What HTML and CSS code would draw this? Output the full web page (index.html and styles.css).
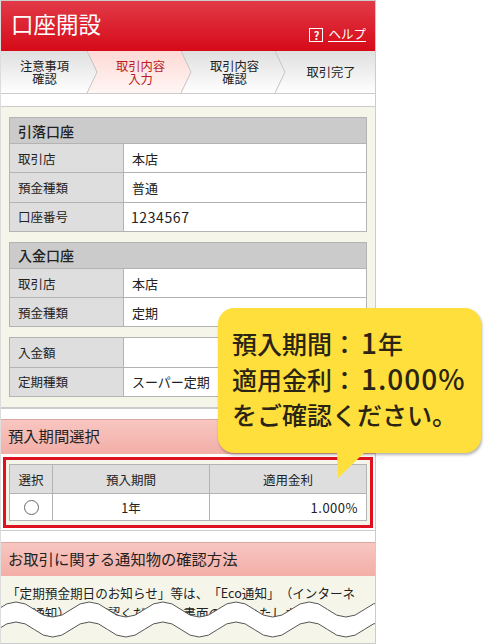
FILE: index.html
```html
<!DOCTYPE html>
<html lang="ja">
<head>
    <meta charset="UTF-8">
    <title>口座開設</title>
    <link rel="stylesheet" href="styles.css">
</head>
<body>
    <div class="page">
        <div class="phone">
            <header class="app-header">
                <h1>口座開設</h1>
                <a class="help"><span class="help-icon">?</span><span class="help-label">ヘルプ</span></a>
            </header>

            <nav class="steps">
                <svg class="steps-art" width="375" height="42" viewBox="0 0 375 42">
                    <defs>
                        <linearGradient id="active-bg" x1="0" y1="0" x2="0" y2="1">
                            <stop offset="0" stop-color="#fdd9d5"/>
                            <stop offset="1" stop-color="#fff6f4"/>
                        </linearGradient>
                    </defs>
                    <path d="M86 0 L96 21 L86 42 L180 42 L190 21 L180 0 Z" fill="url(#active-bg)"/>
                    <path d="M86 0 L96 21 L86 42 M180 0 L190 21 L180 42 M274 0 L284 21 L274 42" fill="none" stroke="#c4c4c4" stroke-width="1"/>
                </svg>
                <div class="step step-first">注意事項<br>確認</div>
                <div class="step step-active">取引内容<br>入力</div>
                <div class="step">取引内容<br>確認</div>
                <div class="step step-last">取引完了</div>
            </nav>

            <div class="gap gap-top"></div>

            <section class="panel">
                <table class="info">
                    <colgroup><col class="col-label"><col></colgroup>
                    <tr><th colspan="2" class="info-title">引落口座</th></tr>
                    <tr><th>取引店</th><td>本店</td></tr>
                    <tr><th>預金種類</th><td>普通</td></tr>
                    <tr><th>口座番号</th><td class="account-no">1234567</td></tr>
                </table>
                <table class="info">
                    <colgroup><col class="col-label"><col></colgroup>
                    <tr><th colspan="2" class="info-title">入金口座</th></tr>
                    <tr><th>取引店</th><td>本店</td></tr>
                    <tr><th>預金種類</th><td>定期</td></tr>
                </table>
                <table class="info">
                    <colgroup><col class="col-label"><col></colgroup>
                    <tr><th>入金額</th><td></td></tr>
                    <tr><th>定期種類</th><td>スーパー定期</td></tr>
                </table>
            </section>

            <div class="gap gap-mid"></div>

            <h2 class="section-head">預入期間選択</h2>
            <div class="select-box">
                <table class="period">
                    <tr><th class="col-radio">選択</th><th class="col-term">預入期間</th><th>適用金利</th></tr>
                    <tr>
                        <td class="col-radio"><span class="radio"></span></td>
                        <td class="col-term">1年</td>
                        <td class="rate">1.000%</td>
                    </tr>
                </table>
            </div>

            <div class="gap gap-low"></div>

            <h2 class="section-head section-head-low">お取引に関する通知物の確認方法</h2>
            <div class="notice">
                <p>「定期預金期日のお知らせ」等は、「Eco通知」（インターネ<br>ット通知）でご確認ください。書面の送付いたしません。</p>
            </div>

            <svg class="wave" width="374" height="50" viewBox="0 0 374 50">
                <path fill="#fff" d="M-3.3 14.5 Q15 -0.5 33.3 14.5 T70 14.5 T106.6 14.5 T143.3 14.5 T180 14.5 T216.6 14.5 T253.3 14.5 T290 14.5 T326.6 14.5 T363.3 14.5 T400 14.5 L400 34.5 Q381.6 19.5 363.3 34.5 T326.6 34.5 T290 34.5 T253.3 34.5 T216.6 34.5 T180 34.5 T143.3 34.5 T106.6 34.5 T70 34.5 T33.3 34.5 T-3.3 34.5 Z"/>
                <path class="wave-line" d="M-3.3 14.5 Q15 -0.5 33.3 14.5 T70 14.5 T106.6 14.5 T143.3 14.5 T180 14.5 T216.6 14.5 T253.3 14.5 T290 14.5 T326.6 14.5 T363.3 14.5 T400 14.5"/>
                <path class="wave-line" d="M-3.3 34.5 Q15 19.5 33.3 34.5 T70 34.5 T106.6 34.5 T143.3 34.5 T180 34.5 T216.6 34.5 T253.3 34.5 T290 34.5 T326.6 34.5 T363.3 34.5 T400 34.5"/>
            </svg>
        </div>

        <div class="callout">
            <p>預入期間：<span class="callout-num">1</span>年<br>適用金利：<span class="callout-num">1.000%</span><br>をご確認ください。</p>
            <svg class="callout-tail" width="28" height="26" viewBox="0 0 28 26"><path d="M0 0 L28 0 L1 26 Z" fill="#fedf3c"/></svg>
        </div>
    </div>
</body>
</html>
```
FILE: styles.css
```css
* {
    box-sizing: border-box;
}

html, body {
    margin: 0;
    height: 644px;
    overflow: hidden;
    background-color: #fff;
}

body {
    font-family: "Noto Sans CJK JP", "Liberation Sans", sans-serif;
    color: #222;
    text-spacing-trim: space-all;
}

.page {
    position: relative;
    width: 485px;
    height: 644px;
}

.phone {
    position: relative;
    width: 376px;
    height: 644px;
    overflow: hidden;
    padding-top: 1px;
    border: 1px solid #ccc;
    border-left-color: #ddd;
}

.app-header {
    display: flex;
    justify-content: space-between;
    align-items: flex-start;
    height: 50px;
    margin-top: -1px;
    padding: 0 9px 0 10px;
    background: linear-gradient(#e23a48, #d60a18);
    color: #fff;
}

.app-header h1 {
    margin: 6px 0 0;
    font-size: 22.5px;
    line-height: 32px;
    font-weight: 400;
}

.help {
    display: flex;
    align-items: center;
    gap: 5px;
    margin-top: 26px;
    font-size: 12.5px;
    line-height: 14px;
}

.help-icon {
    width: 14px;
    height: 14px;
    border: 1px solid #fff;
    font-size: 11px;
    line-height: 12px;
    font-weight: 700;
    text-align: center;
}

.help-label {
    border-bottom: 1px solid #fff;
}

.steps {
    position: relative;
    display: flex;
    height: 43px;
    padding-top: 1px;
    background: linear-gradient(#dfdfdf, #fff);
    border-bottom: 1px solid #ccc;
    font-size: 12.3px;
    line-height: 13px;
    text-align: center;
    color: #222;
}

.steps-art {
    position: absolute;
    top: 0;
    left: 0;
}

.step {
    position: relative;
    display: flex;
    align-items: center;
    justify-content: center;
    width: 94px;
    padding-left: 11px;
}

.step-first {
    width: 87px;
    padding-left: 0;
}

.step-active {
    color: #bb1a22;
}

.step-last {
    flex: 1;
    padding-left: 11px;
}

.gap-top {
    height: 13px;
    border-bottom: 1px solid #ccc;
}

.panel {
    display: flex;
    flex-direction: column;
    gap: 10px;
    padding: 10px 8px 10px;
    background-color: #f5f6e9;
    border-bottom: 2px solid #ccc;
}

table {
    width: 100%;
    border-collapse: collapse;
    table-layout: fixed;
}

.col-label {
    width: 114px;
}

.info th, .info td {
    height: 29.3px;
    border: 1px solid #b3b3b3;
    font-size: 12.5px;
    font-weight: 400;
    text-align: left;
    background-color: #fff;
}

.info th {
    padding: 0 8px;
    background-color: #dedede;
}

.info td {
    padding: 0 8px;
    font-size: 13px;
}

.info .account-no {
    padding-left: 7px;
    font-size: 14px;
    letter-spacing: 0.6px;
}

.info .info-title {
    height: 26px;
    background-color: #cbcbcb;
    font-size: 14px;
    font-weight: 500;
}

.gap-mid {
    height: 11px;
    border-bottom: 1px solid #dba6a0;
}

.section-head {
    margin: 0;
    height: 34px;
    padding: 0 7px;
    background: linear-gradient(#f8c6c1, #f3aea7);
    font-size: 15.3px;
    line-height: 31px;
    font-weight: 400;
}

.select-box {
    margin: 3px 2px 0;
    padding: 4px 3px;
    height: 71px;
    border: 3px solid #df1020;
    background-color: #f5f6e9;
}

.period th, .period td {
    border: 1px solid #b3b3b3;
    font-size: 12.5px;
    font-weight: 400;
    text-align: center;
    background-color: #fff;
}

.period th {
    height: 29px;
    background-color: #dedede;
}

.period td {
    height: 27px;
}

.period .col-radio {
    width: 43px;
}

.period .col-term {
    width: 157px;
}

.period .rate {
    padding-right: 8px;
    text-align: right;
    font-size: 13px;
    letter-spacing: 0.5px;
}

.radio {
    display: block;
    width: 15px;
    height: 15px;
    margin: 0 auto;
    border: 1px solid #666;
    border-radius: 50%;
    background-color: #fff;
}

.gap-low {
    height: 12px;
    border-top: 1px solid #ccc;
    margin-top: 2px;
}

.section-head-low {
    border-top: 1px solid #dba6a0;
}

.notice {
    height: 80px;
    padding: 7px 6px;
    background-color: #f5f6e9;
    font-size: 12.6px;
    line-height: 20px;
}

.notice p {
    margin: 0;
    white-space: nowrap;
}

.wave {
    position: absolute;
    left: 0;
    top: 594px;
}

.wave-line {
    fill: none;
    stroke: #555;
    stroke-width: 1;
}

.callout {
    position: absolute;
    left: 218px;
    top: 308px;
    width: 263px;
    height: 145px;
    padding: 18px 14px;
    border-radius: 16px;
    background-color: #fedf3c;
    box-shadow: 1px 2px 3px rgba(0, 0, 0, 0.3);
    font-size: 25px;
    line-height: 35.5px;
    font-weight: 500;
    color: #2a2414;
    white-space: nowrap;
}

.callout p {
    margin: 0;
}

.callout-num {
    margin-left: 4px;
    font-size: 28px;
    line-height: 1;
    letter-spacing: 1px;
}

.callout-tail {
    position: absolute;
    left: 119px;
    top: 144px;
}
```
